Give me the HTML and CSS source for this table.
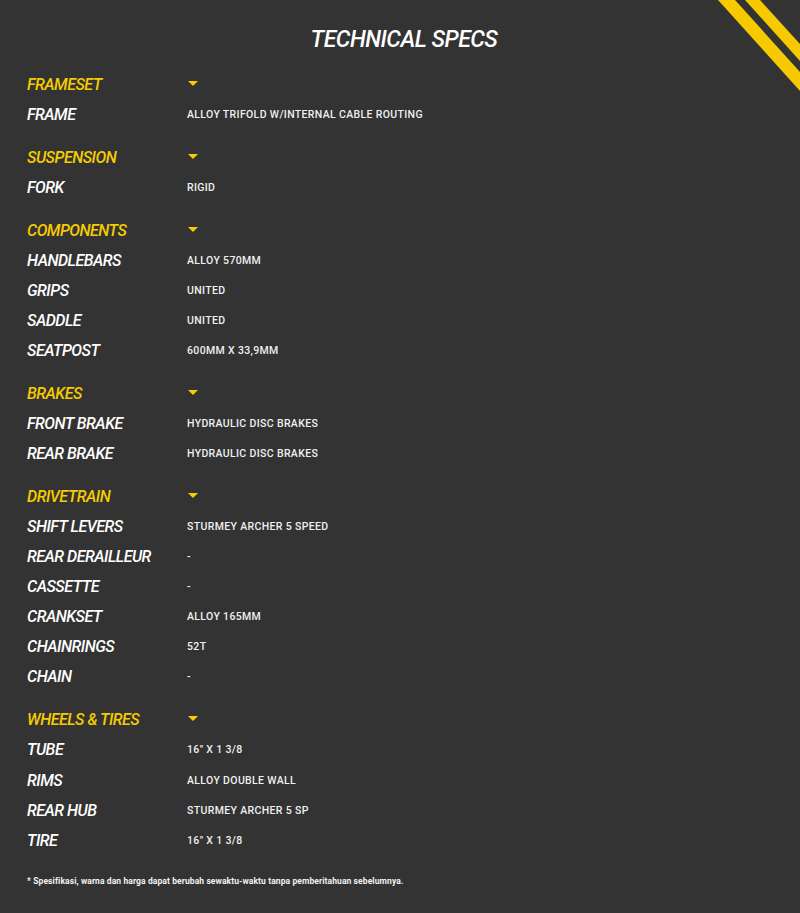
FILE: index.html
```html
<!DOCTYPE html>
<html lang="id">
<head>
<meta charset="utf-8">
<title>Technical Specs</title>
<link rel="stylesheet" href="styles.css">
</head>
<body>
<div class="page">
  <svg class="stripes" width="90" height="100" viewBox="0 0 90 100" aria-hidden="true">
    <polygon points="8,0 25,0 90,72 90,91" fill="#f7c900"/>
    <polygon points="35,0 50,0 90,44 90,61" fill="#f7c900"/>
  </svg>
  <h1 class="title">TECHNICAL SPECS</h1>

  <section class="group">
    <div class="row head"><span class="label">FRAMESET</span><span class="caret"></span></div>
    <div class="row"><span class="label">FRAME</span><span class="value">ALLOY TRIFOLD W/INTERNAL CABLE ROUTING</span></div>
  </section>

  <section class="group">
    <div class="row head"><span class="label">SUSPENSION</span><span class="caret"></span></div>
    <div class="row"><span class="label">FORK</span><span class="value">RIGID</span></div>
  </section>

  <section class="group">
    <div class="row head"><span class="label">COMPONENTS</span><span class="caret"></span></div>
    <div class="row"><span class="label">HANDLEBARS</span><span class="value">ALLOY 570MM</span></div>
    <div class="row"><span class="label">GRIPS</span><span class="value">UNITED</span></div>
    <div class="row"><span class="label">SADDLE</span><span class="value">UNITED</span></div>
    <div class="row"><span class="label">SEATPOST</span><span class="value">600MM X 33,9MM</span></div>
  </section>

  <section class="group">
    <div class="row head"><span class="label">BRAKES</span><span class="caret"></span></div>
    <div class="row"><span class="label">FRONT BRAKE</span><span class="value">HYDRAULIC DISC BRAKES</span></div>
    <div class="row"><span class="label">REAR BRAKE</span><span class="value">HYDRAULIC DISC BRAKES</span></div>
  </section>

  <section class="group">
    <div class="row head"><span class="label">DRIVETRAIN</span><span class="caret"></span></div>
    <div class="row"><span class="label">SHIFT LEVERS</span><span class="value">STURMEY ARCHER 5 SPEED</span></div>
    <div class="row"><span class="label">REAR DERAILLEUR</span><span class="value">-</span></div>
    <div class="row"><span class="label">CASSETTE</span><span class="value">-</span></div>
    <div class="row"><span class="label">CRANKSET</span><span class="value">ALLOY 165MM</span></div>
    <div class="row"><span class="label">CHAINRINGS</span><span class="value">52T</span></div>
    <div class="row"><span class="label">CHAIN</span><span class="value">-</span></div>
  </section>

  <section class="group">
    <div class="row head"><span class="label">WHEELS &amp; TIRES</span><span class="caret"></span></div>
    <div class="row"><span class="label">TUBE</span><span class="value">16" X 1 3/8</span></div>
    <div class="row"><span class="label">RIMS</span><span class="value">ALLOY DOUBLE WALL</span></div>
    <div class="row"><span class="label">REAR HUB</span><span class="value">STURMEY ARCHER 5 SP</span></div>
    <div class="row"><span class="label">TIRE</span><span class="value">16" X 1 3/8</span></div>
  </section>

  <p class="note">* Spesifikasi, warna dan harga dapat berubah sewaktu-waktu tanpa pemberitahuan sebelumnya.</p>
</div>
</body>
</html>
```

FILE: styles.css
```css
html, body {
  margin: 0;
  padding: 0;
  background: #333333;
}

.page {
  position: relative;
  width: 800px;
  height: 913px;
  box-sizing: border-box;
  padding: 25px 27px 0 27px;
  overflow: hidden;
  background: #333333;
  font-family: "Roboto", "Liberation Sans", sans-serif;
  color: #ffffff;
}

.stripes {
  position: absolute;
  top: 0;
  right: 0;
}

.title {
  margin: 0 0 14px 8px;
  text-align: center;
  font-size: 23px;
  line-height: 30px;
  font-style: italic;
  font-weight: 500;
  letter-spacing: -0.5px;
  color: #ffffff;
}

.group {
  margin-bottom: 12.8px;
}

.row {
  display: flex;
  align-items: center;
  height: 30.1px;
}

.label {
  width: 160px;
  flex: none;
  font-size: 16px;
  font-style: italic;
  font-weight: 500;
  letter-spacing: -0.5px;
  color: #ffffff;
}

.head .label {
  color: #f7cc00;
}

.value {
  font-size: 10.5px;
  font-weight: 500;
  letter-spacing: 0.35px;
  color: #f0f0f0;
}

.caret {
  width: 0;
  height: 0;
  margin-left: 1px;
  margin-top: -2px;
  border-left: 5px solid transparent;
  border-right: 5px solid transparent;
  border-top: 5px solid #f7cc00;
}

.note {
  margin: 21px 0 0 0;
  font-size: 8.5px;
  font-weight: 700;
  letter-spacing: 0.1px;
  color: #f2f2f2;
}
```
